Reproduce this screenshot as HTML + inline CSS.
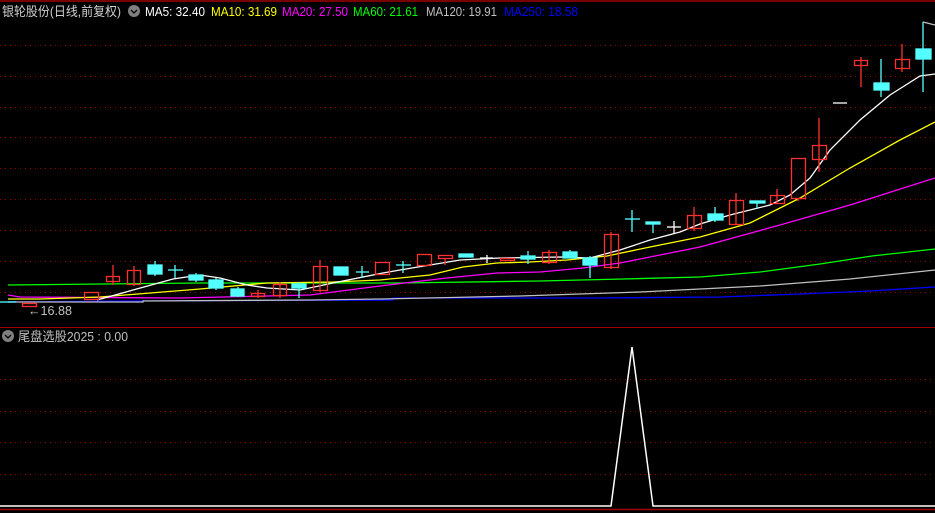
<!DOCTYPE html>
<html><head><meta charset="utf-8"><style>
html,body{margin:0;padding:0;background:#000;width:935px;height:513px;overflow:hidden}
svg{position:absolute;left:0;top:0}
.t{font-family:"Liberation Sans","Noto Sans CJK SC",sans-serif;font-size:13px}
</style></head><body>
<svg width="935" height="513" viewBox="0 0 935 513" xmlns="http://www.w3.org/2000/svg">
<line x1="0" y1="1" x2="935" y2="1" stroke="#a00000" stroke-width="1.5"/>
<g stroke="#900000" stroke-width="1" stroke-dasharray="1,4">
<line x1="0" y1="45.5" x2="935" y2="45.5"/><line x1="0" y1="76.5" x2="935" y2="76.5"/>
<line x1="0" y1="107.5" x2="935" y2="107.5"/><line x1="0" y1="137.5" x2="935" y2="137.5"/>
<line x1="0" y1="168.5" x2="935" y2="168.5"/><line x1="0" y1="199.5" x2="935" y2="199.5"/>
<line x1="0" y1="230.5" x2="935" y2="230.5"/><line x1="0" y1="261.5" x2="935" y2="261.5"/>
<line x1="0" y1="292.5" x2="935" y2="292.5"/>
<line x1="0" y1="379.5" x2="935" y2="379.5"/><line x1="0" y1="411.5" x2="935" y2="411.5"/>
<line x1="0" y1="442.5" x2="935" y2="442.5"/><line x1="0" y1="474.5" x2="935" y2="474.5"/>
</g>
<line x1="0" y1="327.5" x2="935" y2="327.5" stroke="#a00000" stroke-width="1"/>
<line x1="0" y1="509.5" x2="935" y2="509.5" stroke="#a00000" stroke-width="1.5"/>
<g fill="none" stroke-width="1.3">
<polyline stroke="#0000ff" points="8,302 123,301 393,300 393,298 600,298 720,297 800,294 870,291 935,287"/>
<polyline stroke="#c0c0c0" points="8,302 143,302 143,301 310,300 380,299 520,296 640,292 760,286 850,279 935,270"/>
<polyline stroke="#00ff00" points="8,285 200,283 400,283 540,281 623,279 700,277 760,272 820,264 872,256 935,249"/>
<polyline stroke="#ff00ff" points="8,295 20,297 180,298 310,295 380,286 413,282 447,278 497,273 540,272 583,268 620,263 700,247 780,225 850,205 935,178"/>
<polyline stroke="#ffff00" points="8,299 40,299 100,297 200,289 267,283 333,282 380,280 430,275 463,267 497,263 530,262 567,260 607,256 650,247 700,237 750,223 800,198 850,168 900,140 935,122"/>
<polyline stroke="#ffffff" points="97,300 133,290 173,279 200,275 220,278 247,285 267,288 300,290 333,283 383,273 400,270 460,260 500,258 560,257 590,258 620,250 650,240 680,232 700,224 730,215 770,205 790,195 810,178 830,150 860,120 890,95 920,76 935,74"/>
<polyline stroke="#c0c0c0" points="923,22 935,25"/>
</g>
<line x1="0" y1="302" x2="16" y2="302" stroke="#54ffff" stroke-width="1.3"/>
<g stroke="#ff3030" stroke-width="1.3" fill="none">
<rect x="22.5" y="303.5" width="14" height="3"/>
<rect x="84.5" y="292.5" width="14" height="7"/>
<line x1="113" y1="265" x2="113" y2="285"/><rect x="106.5" y="276.5" width="13" height="5"/>
<line x1="134" y1="266" x2="134" y2="286"/><rect x="127.5" y="270.5" width="13" height="14"/>
<line x1="258" y1="290" x2="258" y2="298"/><rect x="251.5" y="293.5" width="13" height="3"/>
<line x1="280" y1="282" x2="280" y2="298"/><rect x="273.5" y="284.5" width="13" height="11"/>
<line x1="320" y1="260" x2="320" y2="292"/><rect x="313.5" y="266.5" width="14" height="24"/>
<rect x="375.5" y="262.5" width="14" height="12"/>
<rect x="417.5" y="254.5" width="14" height="11"/>
<line x1="445" y1="258" x2="445" y2="265"/><rect x="438.5" y="255.5" width="14" height="3"/>
<rect x="500.5" y="258.5" width="14" height="2"/>
<line x1="549" y1="250" x2="549" y2="264"/><rect x="542.5" y="252.5" width="14" height="10"/>
<line x1="611" y1="232" x2="611" y2="269"/><rect x="604.5" y="234.5" width="14" height="33"/>
<line x1="694" y1="207" x2="694" y2="231"/><rect x="687.5" y="215.5" width="14" height="13"/>
<line x1="736" y1="193" x2="736" y2="224"/><rect x="729.5" y="200.5" width="14" height="24"/>
<line x1="777" y1="189" x2="777" y2="203"/><rect x="770.5" y="195.5" width="14" height="8"/>
<line x1="798" y1="198" x2="798" y2="201"/><rect x="791.5" y="158.5" width="14" height="40"/>
<line x1="819" y1="118" x2="819" y2="172"/><rect x="812.5" y="145.5" width="14" height="14"/>
<line x1="861" y1="57" x2="861" y2="87"/><rect x="854.5" y="60.5" width="13" height="5"/>
<line x1="902" y1="44" x2="902" y2="72"/><rect x="895.5" y="59.5" width="14" height="9"/>
</g>
<g stroke="#54ffff" stroke-width="1.3" fill="#54ffff">
<line x1="155" y1="261" x2="155" y2="276"/><rect x="148" y="265" width="14" height="9"/>
<line x1="175" y1="265" x2="175" y2="278"/><line x1="168" y1="270" x2="183" y2="270"/>
<line x1="196" y1="273" x2="196" y2="282"/><rect x="189" y="275" width="14" height="5"/>
<line x1="216" y1="278" x2="216" y2="290"/><rect x="209" y="280" width="14" height="8"/>
<line x1="238" y1="287" x2="238" y2="297"/><rect x="231" y="289" width="13" height="7"/>
<line x1="299" y1="282" x2="299" y2="298"/><rect x="292" y="284" width="14" height="4"/>
<rect x="334" y="267" width="14" height="8"/>
<line x1="362" y1="266" x2="362" y2="278"/><line x1="356" y1="272" x2="369" y2="272"/>
<line x1="403" y1="261" x2="403" y2="273"/><line x1="396" y1="265" x2="411" y2="265"/>
<rect x="459" y="254" width="14" height="3"/>
<line x1="528" y1="251" x2="528" y2="264"/><rect x="521" y="256" width="14" height="3"/>
<line x1="570" y1="250" x2="570" y2="258"/><rect x="563" y="252" width="14" height="6"/>
<line x1="590" y1="256" x2="590" y2="278"/><rect x="583" y="258" width="14" height="7"/>
<line x1="632" y1="210" x2="632" y2="232"/><line x1="625" y1="219" x2="640" y2="219"/>
<line x1="653" y1="222" x2="653" y2="233"/><rect x="646" y="222" width="14" height="2"/>
<line x1="715" y1="207" x2="715" y2="222"/><rect x="708" y="214" width="15" height="6"/>
<line x1="757" y1="201" x2="757" y2="209"/><rect x="750" y="201" width="15" height="2"/>
<line x1="881" y1="59" x2="881" y2="97"/><rect x="874" y="83" width="15" height="7"/>
<line x1="923" y1="22" x2="923" y2="92"/><rect x="916" y="49" width="15" height="10"/>
</g>
<g stroke="#ffffff" stroke-width="1.3">
<line x1="487" y1="255" x2="487" y2="263"/><line x1="480" y1="258" x2="493" y2="258"/>
<line x1="674" y1="221" x2="674" y2="233"/><line x1="667" y1="227" x2="681" y2="227"/>
<line x1="833" y1="103" x2="847" y2="103"/>
</g>
<text x="28" y="315" class="t" fill="#c0c0c0" font-size="12" textLength="44" lengthAdjust="spacingAndGlyphs">←16.88</text>
<polyline fill="none" stroke="#ffffff" stroke-width="1.5" points="0,506 611,506 632,347 653,506 935,506"/>
<text x="2" y="16" class="t" fill="#d0d0d0" textLength="119" lengthAdjust="spacingAndGlyphs">银轮股份(日线,前复权)</text>
<circle cx="134" cy="11" r="6" fill="#808080"/><polyline points="131,10 134,13 137,10" fill="none" stroke="#000" stroke-width="1.3"/>
<text x="145" y="16" class="t" fill="#ffffff" textLength="60" lengthAdjust="spacingAndGlyphs">MA5: 32.40</text>
<text x="211" y="16" class="t" fill="#ffff00" textLength="66" lengthAdjust="spacingAndGlyphs">MA10: 31.69</text>
<text x="282" y="16" class="t" fill="#ff00ff" textLength="66" lengthAdjust="spacingAndGlyphs">MA20: 27.50</text>
<text x="353" y="16" class="t" fill="#00ff00" textLength="65" lengthAdjust="spacingAndGlyphs">MA60: 21.61</text>
<text x="426" y="16" class="t" fill="#c0c0c0" textLength="71" lengthAdjust="spacingAndGlyphs">MA120: 19.91</text>
<text x="504" y="16" class="t" fill="#0000ff" textLength="74" lengthAdjust="spacingAndGlyphs">MA250: 18.58</text>
<circle cx="8" cy="336" r="6" fill="#808080"/><polyline points="5,335 8,338 11,335" fill="none" stroke="#000" stroke-width="1.3"/>
<text x="18" y="341" class="t" fill="#c0c0c0" textLength="110" lengthAdjust="spacingAndGlyphs">尾盘选股2025 : 0.00</text>
</svg>
</body></html>
